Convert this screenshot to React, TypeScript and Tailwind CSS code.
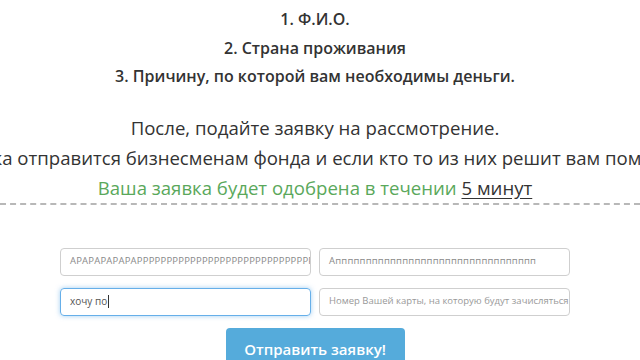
import React from "react";

export default function App() {
  const font = { fontFamily: '"Open Sans", "Noto Sans", sans-serif' };
  return (
    <div className="w-[640px] h-[360px] overflow-hidden bg-white relative" style={font}>
      <div className="w-[630px] flex flex-col items-center pt-[5px] text-[#333]">
        <div className="text-[16px] font-semibold leading-[28.5px]">1. Ф.И.О.</div>
        <div className="text-[16px] font-semibold leading-[28.5px]">2. Страна проживания</div>
        <div className="text-[16px] font-semibold leading-[28.5px]">3. Причину, по которой вам необходимы деньги.</div>
        <div className="mt-[22px] text-[18.6px] leading-[30px]">После, подайте заявку на рассмотрение.</div>
        <div className="w-full flex justify-center">
          <div className="shrink-0 whitespace-nowrap text-[18.6px] leading-[30px]">
            Заявка отправится бизнесменам фонда и если кто то из них решит вам помочь.
          </div>
        </div>
        <div className="text-[18.6px] leading-[30px] text-[#5aa85b]">
          Ваша заявка будет одобрена в течении{" "}
          <span className="text-[#333] underline underline-offset-[3px]">5 минут</span>
        </div>
      </div>
      <div className="w-full border-t-2 border-dashed border-[#b8b8b8]" />
      <div className="w-[630px] flex flex-col items-center mt-[43px]">
        <div className="grid grid-cols-[251px_251px] gap-x-[8px] gap-y-[12px] text-[9.5px]">
          <div className="h-[28px] rounded-[4px] border border-[#cfcfcf] px-[9px] flex items-center overflow-hidden whitespace-nowrap text-[#8a8a8a] tracking-[0.2px]">
            АРАРАРАРАРАРРРРРРРРРРРРРРРРРРРРРРРРРРРРРРРРРРРРРРР
          </div>
          <div className="h-[28px] rounded-[4px] border border-[#cfcfcf] px-[9px] flex items-center overflow-hidden whitespace-nowrap text-[#8a8a8a] tracking-[0.2px]">
            Аппппппппппппппппппппппппппппппппп
          </div>
          <div className="h-[28px] rounded-[4px] border border-[#66afe9] shadow-[0_0_5px_rgba(102,175,233,0.6)] px-[9px] flex items-center overflow-hidden whitespace-nowrap text-[#555] text-[10px]">
            хочу по<span className="inline-block w-px h-[13px] bg-[#333] ml-[1px]" />
          </div>
          <div className="h-[28px] rounded-[4px] border border-[#cfcfcf] px-[9px] flex items-center overflow-hidden whitespace-nowrap text-[#999]">
            Номер Вашей карты, на которую будут зачисляться деньги
          </div>
        </div>
        <button className="mt-[12px] w-[179px] h-[44px] rounded-[4px] bg-[#55abdb] text-white text-[15px] font-semibold">
          Отправить заявку!
        </button>
      </div>
    </div>
  );
}
